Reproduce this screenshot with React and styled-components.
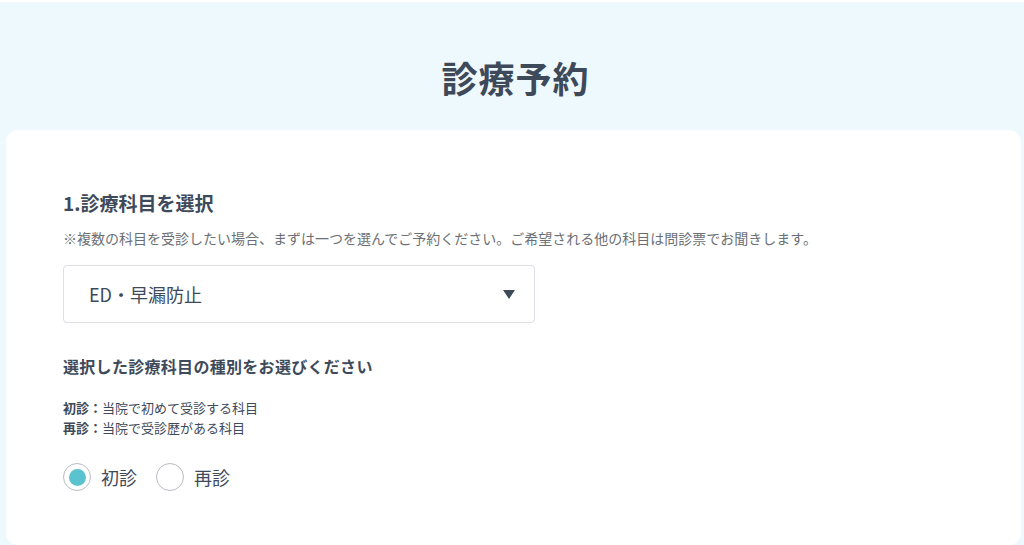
import React, { useState } from 'react';
import styled, { createGlobalStyle } from 'styled-components';

const GlobalStyle = createGlobalStyle`
  html, body {
    margin: 0;
    padding: 0;
    background: #ffffff;
  }
  body {
    font-family: "Noto Sans CJK JP", "Noto Sans", sans-serif;
    color: #3e4a5a;
  }
`;

const Page = styled.div`
  margin-top: 2px;
  background: #eef9fe;
  height: 543px;
  padding: 0 3px 0 6px;
  display: flex;
  flex-direction: column;
  box-sizing: border-box;
  overflow: hidden;
`;

const Title = styled.h1`
  margin: 0;
  height: 128px;
  display: flex;
  align-items: center;
  justify-content: center;
  padding-left: 4px;
  padding-top: 22px;
  box-sizing: border-box;
  font-size: 36px;
  font-weight: 700;
  letter-spacing: 1px;
  color: #3e4a5a;
`;

const Card = styled.section`
  flex: 1;
  background: #ffffff;
  border-radius: 12px;
  padding: 60px 57px 0;
`;

const SectionHeading = styled.h2`
  margin: 0;
  font-size: 19px;
  font-weight: 700;
  line-height: 26px;
  color: #3e4a5a;
`;

const Note = styled.p`
  margin: 11px 0 0;
  font-size: 14px;
  line-height: 22px;
  color: #6b6f75;
`;

const SelectBox = styled.div`
  margin-top: 16px;
  width: 472px;
  height: 58px;
  box-sizing: border-box;
  border: 1px solid #dcdfe4;
  border-radius: 4px;
  display: flex;
  align-items: center;
  justify-content: space-between;
  padding: 0 19px 0 25px;
  font-size: 18px;
  color: #3e4a5a;
`;

const Caret = styled.span`
  width: 0;
  height: 0;
  border-left: 6px solid transparent;
  border-right: 6px solid transparent;
  border-top: 9px solid #3e4a5a;
`;

const SubHeading = styled.h3`
  margin: 32px 0 0;
  font-size: 16px;
  font-weight: 700;
  line-height: 22px;
  letter-spacing: 0.3px;
  color: #3e4a5a;
`;

const Legend = styled.div`
  margin-top: 21px;
  font-size: 13px;
  line-height: 20px;
  color: #3e4a5a;
`;

const Strong = styled.span`
  font-weight: 700;
`;

const RadioRow = styled.div`
  margin-top: 25px;
  display: flex;
  align-items: center;
  gap: 19px;
`;

const RadioLabel = styled.label`
  display: flex;
  align-items: center;
  gap: 10px;
  font-size: 18px;
  color: #3e4a5a;
  cursor: pointer;
`;

const RadioCircle = styled.span`
  width: 28px;
  height: 28px;
  box-sizing: border-box;
  border: 1px solid #b9bcc3;
  border-radius: 50%;
  display: flex;
  align-items: center;
  justify-content: center;

  &::after {
    content: '';
    width: 17px;
    height: 17px;
    border-radius: 50%;
    background: ${(p) => (p.$checked ? '#5bc2d0' : 'transparent')};
  }
`;

const options = ['初診', '再診'];

const App = () => {
  const [visit, setVisit] = useState('初診');

  return (
    <>
      <GlobalStyle />
      <Page>
        <Title>診療予約</Title>
        <Card>
          <SectionHeading>1.診療科目を選択</SectionHeading>
          <Note>
            ※複数の科目を受診したい場合、まずは一つを選んでご予約ください。ご希望される他の科目は問診票でお聞きします。
          </Note>
          <SelectBox>
            <span>ED・早漏防止</span>
            <Caret />
          </SelectBox>
          <SubHeading>選択した診療科目の種別をお選びください</SubHeading>
          <Legend>
            <div>
              <Strong>初診：</Strong>当院で初めて受診する科目
            </div>
            <div>
              <Strong>再診：</Strong>当院で受診歴がある科目
            </div>
          </Legend>
          <RadioRow>
            {options.map((opt) => (
              <RadioLabel key={opt} onClick={() => setVisit(opt)}>
                <RadioCircle $checked={visit === opt} />
                {opt}
              </RadioLabel>
            ))}
          </RadioRow>
        </Card>
      </Page>
    </>
  );
};

export default App;
